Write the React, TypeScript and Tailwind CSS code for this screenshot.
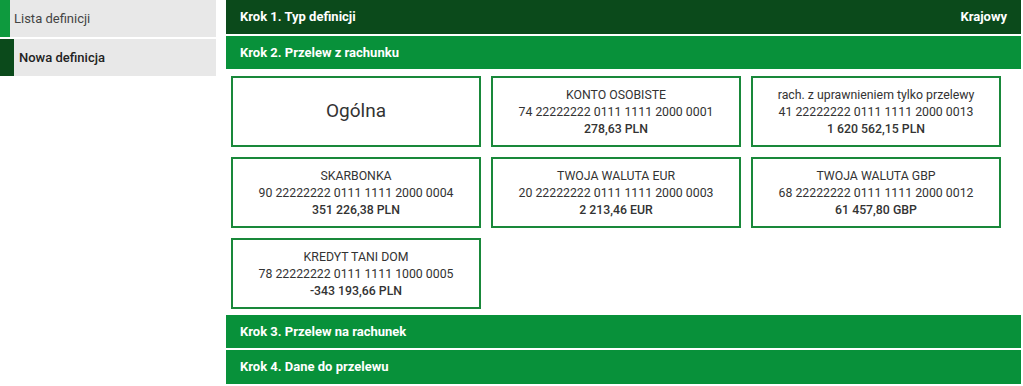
import React from "react";

const accounts = [
  { name: "KONTO OSOBISTE", nr: "74 22222222 0111 1111 2000 0001", amt: "278,63 PLN" },
  { name: "rach. z uprawnieniem tylko przelewy", nr: "41 22222222 0111 1111 2000 0013", amt: "1 620 562,15 PLN" },
  { name: "SKARBONKA", nr: "90 22222222 0111 1111 2000 0004", amt: "351 226,38 PLN" },
  { name: "TWOJA WALUTA EUR", nr: "20 22222222 0111 1111 2000 0003", amt: "2 213,46 EUR" },
  { name: "TWOJA WALUTA GBP", nr: "68 22222222 0111 1111 2000 0012", amt: "61 457,80 GBP" },
  { name: "KREDYT TANI DOM", nr: "78 22222222 0111 1111 1000 0005", amt: "-343 193,66 PLN" },
];

export default function App() {
  return (
    <div
      className="flex w-[1023px] h-[386px] bg-white text-[#333]"
      style={{ fontFamily: "Roboto, 'Liberation Sans', sans-serif" }}
    >
      <aside className="w-[216px] shrink-0 flex flex-col gap-[2px]">
        <div className="h-[37px] flex bg-[#e8e8e8]">
          <div className="w-[10px] bg-[#0e9a3e]" />
          <div className="pl-[4px] flex items-center text-[13px] text-[#444]">Lista definicji</div>
        </div>
        <div className="h-[37px] flex bg-[#e8e8e8]">
          <div className="w-[14px] bg-[#0b4a1b]" />
          <div className="pl-[5px] flex items-center text-[13px] font-medium text-[#222]">Nowa definicja</div>
        </div>
      </aside>
      <main className="ml-[10px] w-[795px] flex flex-col">
        <div className="h-[34px] bg-[#0b4a1b] flex items-center justify-between px-[14px] text-white text-[13px] font-bold">
          <span>Krok 1. Typ definicji</span>
          <span>Krajowy</span>
        </div>
        <div className="mt-[2px] h-[33px] bg-[#08913a] flex items-center px-[14px] text-white text-[13px] font-bold">
          Krok 2. Przelew z rachunku
        </div>
        <div className="pl-[5px] pt-[7px] pb-[6px] grid grid-cols-[250px_250px_250px] gap-[10px]">
          <div className="h-[71px] border-2 border-[#19883a] flex items-center justify-center text-[19px] text-[#333]">
            Ogólna
          </div>
          {accounts.map((a) => (
            <div
              key={a.nr}
              className="h-[71px] pt-[2px] border-2 border-[#19883a] flex flex-col items-center justify-center text-[12.3px] leading-[17px] text-[#333]"
            >
              <div>{a.name}</div>
              <div>{a.nr}</div>
              <div className="font-medium">{a.amt}</div>
            </div>
          ))}
        </div>
        <div className="h-[33px] bg-[#08913a] flex items-center px-[14px] text-white text-[13px] font-bold">
          Krok 3. Przelew na rachunek
        </div>
        <div className="mt-[2px] h-[34px] bg-[#08913a] flex items-center px-[14px] text-white text-[13px] font-bold">
          Krok 4. Dane do przelewu
        </div>
      </main>
    </div>
  );
}
